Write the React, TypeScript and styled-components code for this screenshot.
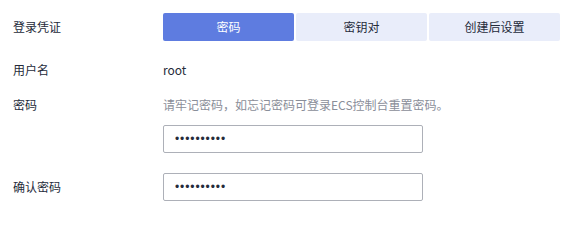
import React from 'react';
import styled, { createGlobalStyle } from 'styled-components';

const GlobalStyle = createGlobalStyle`
  body {
    margin: 0;
    background: #ffffff;
    font-family: "Noto Sans CJK SC", "Noto Sans", sans-serif;
    font-size: 12px;
    color: #252b3a;
  }
`;

const Form = styled.div`
  display: flex;
  flex-direction: column;
  padding: 13px 0 0 13px;
`;

const Row = styled.div<{ $gap?: number; $align?: string }>`
  display: flex;
  align-items: ${(p) => p.$align || 'center'};
  margin-bottom: ${(p) => (p.$gap !== undefined ? p.$gap : 0)}px;
`;

const Label = styled.div<{ $height?: number }>`
  width: 150px;
  flex: none;
  line-height: ${(p) => p.$height || 28}px;
  color: #252b3a;
`;

const Field = styled.div`
  display: flex;
  flex-direction: column;
`;

const Tabs = styled.div`
  display: flex;
  gap: 2px;
`;

const Tab = styled.div<{ $active?: boolean }>`
  width: 131px;
  height: 28px;
  line-height: 28px;
  text-align: center;
  background: ${(p) => (p.$active ? '#5e7ce0' : '#e9edfa')};
  color: ${(p) => (p.$active ? '#ffffff' : '#252b3a')};
  border-radius: 2px;
  cursor: pointer;
`;

const Value = styled.div`
  line-height: 28px;
  color: #252b3a;
`;

const Hint = styled.div`
  line-height: 20px;
  color: #8a8e99;
  margin-bottom: 10px;
`;

const Input = styled.input`
  box-sizing: border-box;
  width: 260px;
  height: 28px;
  padding: 0 11px;
  border: 1px solid #adb0b8;
  border-radius: 2px;
  font-family: "Liberation Sans", Arial, sans-serif;
  font-size: 12px;
  color: #252b3a;
  letter-spacing: 0.9px;
  outline: none;
`;

export default function App() {
  return (
    <>
      <GlobalStyle />
      <Form>
        <Row $gap={15}>
          <Label>登录凭证</Label>
          <Tabs>
            <Tab $active>密码</Tab>
            <Tab>密钥对</Tab>
            <Tab>创建后设置</Tab>
          </Tabs>
        </Row>
        <Row $gap={11}>
          <Label>用户名</Label>
          <Value>root</Value>
        </Row>
        <Row $gap={20} $align="flex-start">
          <Label $height={20}>密码</Label>
          <Field>
            <Hint>请牢记密码，如忘记密码可登录ECS控制台重置密码。</Hint>
            <Input type="password" defaultValue="1234567890" />
          </Field>
        </Row>
        <Row>
          <Label>确认密码</Label>
          <Input type="password" defaultValue="1234567890" />
        </Row>
      </Form>
    </>
  );
}
